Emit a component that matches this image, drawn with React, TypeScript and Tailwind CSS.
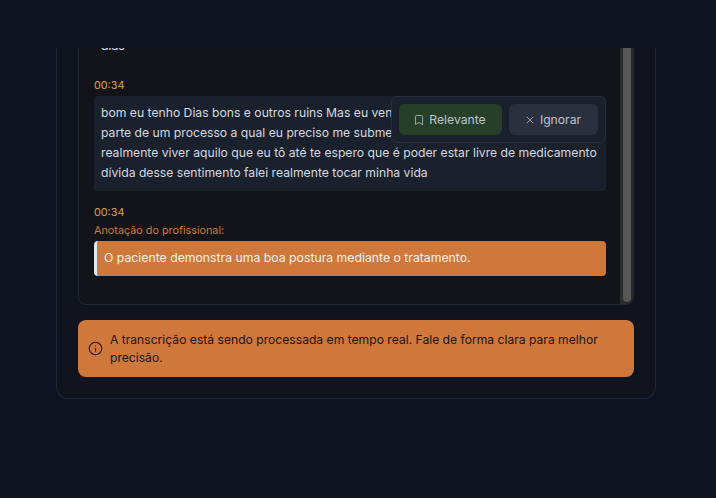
import { Bookmark, Info, X } from "lucide-react";

export default function App() {
  return (
    <div className="h-[498px] w-[716px] overflow-hidden flex flex-col bg-[#0d1320] font-['Inter',sans-serif] text-[12.25px]">
      <div className="h-12 shrink-0" />
      <div className="ml-14 h-[351px] w-[600px] shrink-0 rounded-b-xl border border-t-0 border-[#1e2735] bg-[#10141e] px-[21px]">
        <div className="flex h-[257px] overflow-hidden rounded-b-lg border border-t-0 border-[#1e2735] bg-[#131419]">
          <div className="flex-1 min-w-0 pl-[15px] pr-[14px]">
            <p className="-mt-[12px] h-5 leading-5 text-[#e2e8f0] pl-[7px]">dias</p>
            <p className="mt-[22px] text-[10.8px] leading-4 text-[#d9a441]">00:34</p>
            <div className="relative mt-[2px] h-[95px] rounded bg-[#1a212d] pl-[7px] pr-[4px] py-[7px] text-[12.18px] leading-5 text-[#d4d9e0]">
              <p>
                bom eu tenho Dias bons e outros ruins Mas eu vendo que tudo isso faz<br />
                parte de um processo a qual eu preciso me submeter para poder<br />
                realmente viver aquilo que eu tô até te espero que é poder estar livre de medicamento<br />
                dívida desse sentimento falei realmente tocar minha vida
              </p>
              <div className="absolute right-0 top-0 flex h-[47px] w-[215px] items-center justify-between rounded-md border border-[#262e3c] bg-[#1a212d] px-[7px]">
                <button className="flex h-[31px] w-[103px] items-center justify-center gap-[4px] rounded-md bg-[#263f29] pr-[2px] text-[#bcc4cc]">
                  <Bookmark size={12} strokeWidth={1.5} />
                  Relevante
                </button>
                <button className="flex h-[31px] w-[89px] items-center justify-center gap-[4px] rounded-md bg-[#2a303d] pr-[2px] text-[#bcc4cc]">
                  <X size={12} strokeWidth={1.5} />
                  Ignorar
                </button>
              </div>
            </div>
            <p className="mt-[14px] text-[10.8px] leading-4 text-[#d9a441]">00:34</p>
            <p className="mt-[2px] text-[10.8px] leading-4 text-[#c77b3f]">Anotação do profissional:</p>
            <div className="mt-[2px] flex h-[35px] items-center rounded border-l-[3px] border-[#e2e8f0] bg-[#cf783c] pl-[7px] text-[#fff1e6]">
              O paciente demonstra uma boa postura mediante o tratamento.
            </div>
          </div>
          <div className="w-[13px] shrink-0 border-l border-[#2e2e2e] bg-[#2b2b2b] px-[2px] pb-[2px]">
            <div className="h-full rounded-b bg-[#575757]" />
          </div>
        </div>
        <div className="mt-[15px] flex h-[57px] items-center gap-[7px] rounded-lg bg-[#cf783c] pl-[10px] pr-[11px] text-[#1c1410]">
          <Info size={15} strokeWidth={1.75} className="shrink-0" />
          <p className="text-[12.13px] leading-[18px]">
            A transcrição está sendo processada em tempo real. Fale de forma clara para melhor precisão.
          </p>
        </div>
      </div>
    </div>
  );
}
